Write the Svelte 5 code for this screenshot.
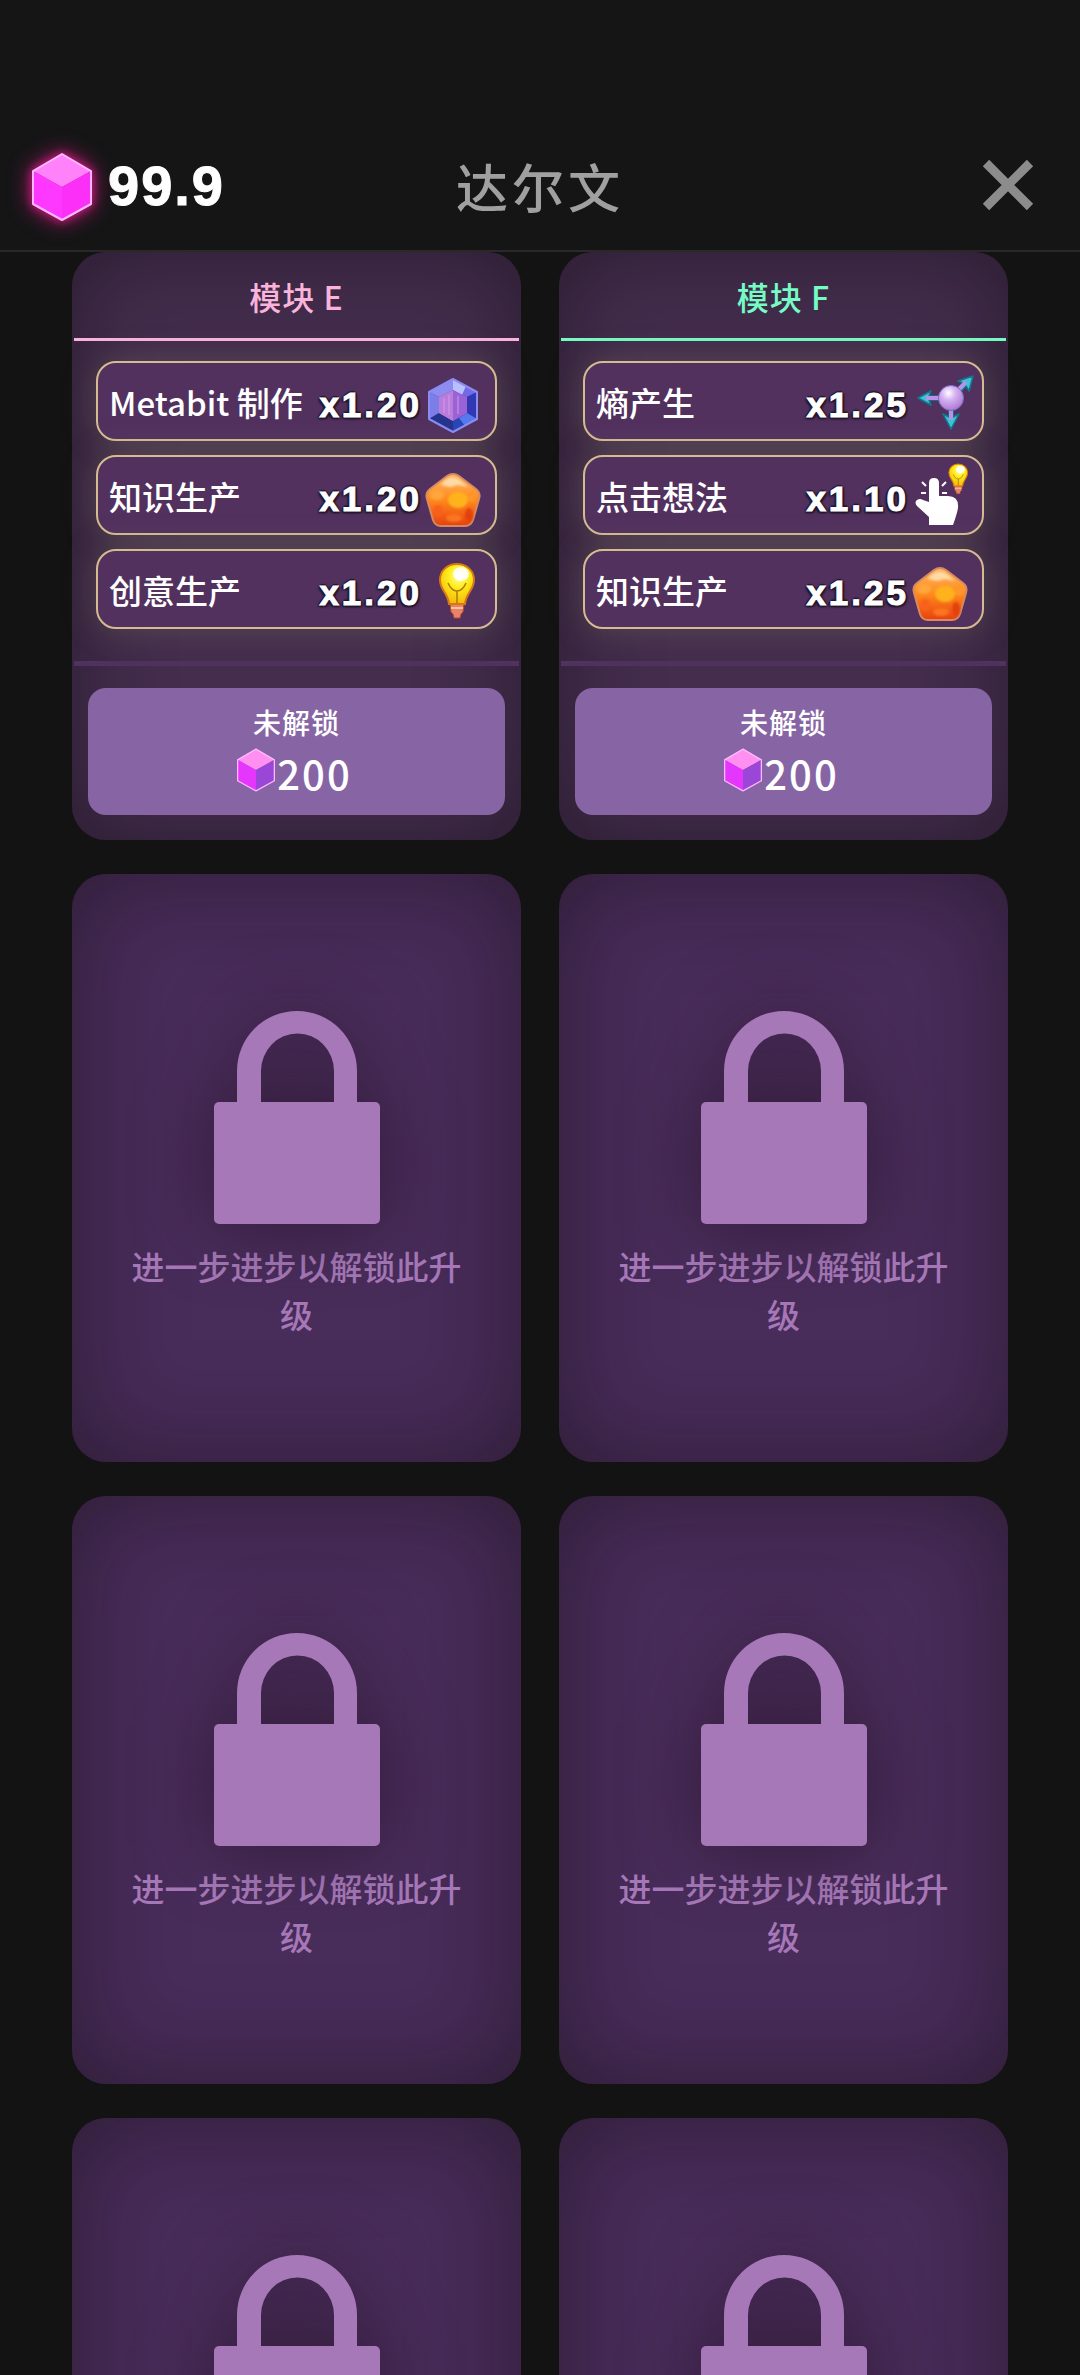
<script>
  const modules = [
    {
      name: "模块 E",
      tone: "pink",
      cost: 200,
      boosts: [
        { label: "Metabit 制作", value: "x1.20", icon: "gem" },
        { label: "知识生产", value: "x1.20", icon: "amber" },
        { label: "创意生产", value: "x1.20", icon: "bulb" },
      ],
    },
    {
      name: "模块 F",
      tone: "mint",
      cost: 200,
      boosts: [
        { label: "熵产生", value: "x1.25", icon: "entropy" },
        { label: "点击想法", value: "x1.10", icon: "tap" },
        { label: "知识生产", value: "x1.25", icon: "amber" },
      ],
    },
  ];
  const lockedCount = 6;
</script>

{#snippet bulbShape()}
  <path d="M28 51h14l-1 8-2 2-1 4h-6l-1-4-2-2z" fill="#e8836a" stroke="#b84a2c" stroke-width="1" />
  <path d="M29 55h12" stroke="#ffc0a0" stroke-width="2" />
  <path d="M35 11c-10 0-17 7-17 16 0 10 8 13 9 24h16c1-11 9-14 9-24 0-9-7-16-17-16z" fill="url(#bulbFill)" stroke="#d87812" stroke-width="2" />
  <path d="M26 30c3 7 7 8 9 8s6-1 9-8M35 38v12" fill="none" stroke="#b07808" stroke-width="1.5" />
  <ellipse cx="39" cy="21" rx="8" ry="7" fill="#fff" opacity=".9" />
{/snippet}

{#snippet boostIcon(name)}
  <svg class="icon" viewBox="0 0 66 72" aria-hidden="true">
    {#if name === "gem"}
      <path d="M31 14 55 27v27L31 67 7 54V27z" fill="#3a3cae" />
      <path d="M31 14 7 27l10 5 14-7z" fill="#8f8cf0" />
      <path d="M31 14 55 27l-10 5-14-7z" fill="#7468e4" />
      <path d="M31 14v11l9 5 4-9z" fill="#b9c0ff" />
      <path d="M7 27v27l10-6V32z" fill="#7c7ee8" />
      <path d="M55 27v27l-10-6V32z" fill="#3038b4" />
      <path d="M7 54l24 13V56l-14-8z" fill="#26348c" />
      <path d="M55 54 31 67V56l14-8z" fill="#2946b8" />
      <path d="M45 48l10 6-12 7-6-8z" fill="#5878ee" />
      <path d="M31 25l14 7v16l-14 8-14-8V32z" fill="#9a62d4" />
      <path d="M31 25v31l-14-8V32z" fill="#b97cda" />
      <path d="M22 33v15M27 30v20M36 31v18" stroke="#d39af0" stroke-width="2" opacity=".5" />
      <path d="M31 14 55 27v27L31 67 7 54V27z" fill="none" stroke="#8a8cf4" stroke-width="2" stroke-linejoin="round" />
    {:else if name === "amber"}
      <path d="M25 17q6-4 12 0l17 13q5 4 3 10l-6 21q-2 6-8 6H19q-6 0-8-6L5 40q-2-6 3-10z" fill="url(#amberFill)" stroke="#d88a62" stroke-width="2" />
      <g filter="url(#soften)">
        <path d="M22 22q9-7 17 0l7 6-10-2-8 2-9-2z" fill="#ffe0b0" opacity=".9" />
        <ellipse cx="15" cy="36" rx="7" ry="5" fill="#ffa63c" />
        <ellipse cx="36" cy="41" rx="10" ry="8" fill="#ffb21e" />
        <ellipse cx="50" cy="37" rx="4" ry="6" fill="#ff962a" />
        <ellipse cx="16" cy="52" rx="5" ry="6" fill="#f9601c" />
        <ellipse cx="32" cy="59" rx="8" ry="4" fill="#fb7420" />
        <ellipse cx="47" cy="56" rx="4" ry="7" fill="#e24310" />
      </g>
    {:else if name === "bulb"}
      {@render bulbShape()}
    {:else if name === "entropy"}
      <g fill="#3cc4d4" stroke="#12788f" stroke-width="1.5" stroke-linejoin="round">
        <path d="M9 33l13-7-2 5h14v4H20l2 5z" />
        <path d="M64 11 49 16l5 2-8 9 3 3 8-9 3 5z" />
        <path d="M42 64l-8-15 6 3V42h4v10l6-3z" />
      </g>
      <path d="M17 33h16M49 25l8-8M42 42v13" stroke="#b892e8" stroke-width="4" />
      <circle cx="42" cy="33" r="12.5" fill="url(#orbFill)" stroke="#7a6cc4" stroke-width="1" />
    {:else}
      <path d="M20 24q0-5 5-5t5 5v13h9q11 0 10 12-1 6-5 17H20v-8L8 47q-3-4 0-6 3-2 6 0l6 2z" fill="#fff" />
      <path d="M13 23l4 4M33 27l4-4M12 34h5M33 34h5" stroke="#fff" stroke-width="2" />
      <g transform="translate(30 -1) scale(.55)">
        {@render bulbShape()}
      </g>
    {/if}
  </svg>
{/snippet}

{#snippet cube(kind)}
  <svg class="cube {kind}" viewBox="0 0 60 68" aria-hidden="true">
    <path class="top" d="M30 1 59 18 30 34 1 18z" />
    <path class="left" d="M1 18 30 34v33L1 51z" />
    <path class="right" d="M59 18 30 34v33l29-16z" />
    <path class="edge" d="M30 1 59 18v33L30 67 1 51V18z" />
  </svg>
{/snippet}

<svg class="defs" aria-hidden="true">
  <radialGradient id="bulbFill" cx=".55" cy=".3" r=".7">
    <stop offset="0" stop-color="#fffbc0" />
    <stop offset=".4" stop-color="#fdf01c" />
    <stop offset="1" stop-color="#f5b80c" />
  </radialGradient>
  <linearGradient id="amberFill" x1="0" y1="0" x2="0" y2="1">
    <stop offset="0" stop-color="#ffb765" />
    <stop offset=".5" stop-color="#ff8a1c" />
    <stop offset="1" stop-color="#e8400e" />
  </linearGradient>
  <radialGradient id="orbFill" cx=".4" cy=".3" r=".8">
    <stop offset="0" stop-color="#fff" />
    <stop offset=".35" stop-color="#d6b4f2" />
    <stop offset="1" stop-color="#a46ccc" />
  </radialGradient>
  <filter id="soften">
    <feGaussianBlur stdDeviation="1" />
  </filter>
</svg>

<div class="screen">
  <header>
    <div class="balance">
      {@render cube("bright")}
      <span>99.9</span>
    </div>
    <h1>达尔文</h1>
    <button class="close" aria-label="关闭">
      <svg viewBox="0 0 52 52" aria-hidden="true">
        <path d="M4 4 48 48M48 4 4 48" />
      </svg>
    </button>
  </header>

  <main>
    <div class="grid">
      {#each modules as module}
        <article class="card module {module.tone}">
          <h2>{module.name}</h2>
          <ul>
            {#each module.boosts as boost}
              <li>
                <span class="label">{boost.label}</span>
                <span class="value">{boost.value}</span>
                {@render boostIcon(boost.icon)}
              </li>
            {/each}
          </ul>
          <div class="buy">
            <button>
              <span class="state">未解锁</span>
              <span class="price">
                {@render cube("small")}
                {module.cost}
              </span>
            </button>
          </div>
        </article>
      {/each}

      {#each Array(lockedCount) as _}
        <article class="card locked">
          <svg class="lock" viewBox="0 0 166 213" aria-hidden="true">
            <rect y="91" width="166" height="122" rx="5" />
            <path d="M23 95V60a60 60 0 0 1 120 0v35h-23V60a36 37 0 0 0-73 0v35z" />
          </svg>
          <p>进一步进步以解锁此升级</p>
        </article>
      {/each}
    </div>
  </main>
</div>

<style>
  :global(body) {
    background: #131313;
  }
  .screen {
    height: 100vh;
    display: flex;
    flex-direction: column;
    overflow: hidden;
    background: #131313;
    color: #fff;
    font-family: "Noto Sans CJK SC", sans-serif;
    font-weight: 500;
  }
  .defs {
    position: absolute;
    width: 0;
    height: 0;
  }
  h1,
  h2,
  p,
  ul {
    margin: 0;
    padding: 0;
    font-weight: 500;
  }
  button {
    border: none;
    padding: 0;
    background: none;
    color: inherit;
    font: inherit;
    cursor: pointer;
  }

  header {
    flex: none;
    display: grid;
    grid-template-columns: 1fr auto 1fr;
    align-items: center;
    padding: 120px 32px 0;
    height: 130px;
    border-bottom: 2px solid #292929;
    background: #151516;
  }
  .balance {
    display: flex;
    align-items: center;
    gap: 16px;
    font: bold 56px "Liberation Sans", sans-serif;
    letter-spacing: 2px;
    -webkit-text-stroke: 1px #fff;
  }
  h1 {
    font-size: 52px;
    letter-spacing: 4px;
    color: #a0a0a0;
  }
  .close {
    justify-self: end;
    width: 52px;
    height: 52px;
    margin-right: 14px;
  }
  .close svg {
    display: block;
    stroke: #8c8c8c;
    stroke-width: 9;
  }

  .cube {
    flex: none;
  }
  .cube .edge {
    fill: none;
    stroke: #ffb8ff;
    stroke-width: 2;
    stroke-linejoin: round;
  }
  .bright {
    width: 60px;
    height: 68px;
    margin-top: 4px;
    filter: drop-shadow(0 0 4px #c81c80) drop-shadow(0 0 10px #b0186c);
  }
  .bright .top {
    fill: #ff82fa;
  }
  .bright .left {
    fill: #ff38ff;
  }
  .bright .right {
    fill: #fb2ff8;
  }
  .small {
    width: 38px;
    height: 44px;
    margin-bottom: 6px;
  }
  .small .top {
    fill: #ff8ff0;
  }
  .small .left {
    fill: #e436fc;
  }
  .small .right {
    fill: #9a46d6;
  }

  main {
    flex: 1;
    min-height: 0;
    overflow-y: auto;
    scrollbar-width: none;
  }
  .grid {
    display: grid;
    grid-template-columns: 1fr 1fr;
    grid-auto-rows: 1fr;
    gap: 34px 38px;
    margin: 0 72px 34px;
  }
  .card {
    box-sizing: border-box;
    border-radius: 34px;
  }

  .module {
    padding: 2px;
    background: #442d4d;
    box-shadow: inset 0 0 90px rgba(20, 15, 24, 0.55);
  }
  .module h2 {
    font-size: 32px;
    line-height: 84px;
    letter-spacing: 1px;
    text-align: center;
    border-bottom: 3px solid;
  }
  .pink h2 {
    color: #fab4dc;
  }
  .mint h2 {
    color: #74fcc4;
  }
  ul {
    display: flex;
    flex-direction: column;
    gap: 14px;
    padding: 20px 22px 32px;
    list-style: none;
    border-bottom: 5px solid #50325f;
  }
  li {
    box-sizing: border-box;
    display: flex;
    align-items: center;
    height: 80px;
    padding: 0 7px 0 11px;
    border: 2px solid #d4bc90;
    border-radius: 20px;
    background: #52315f;
    box-shadow: 0 0 32px rgba(130, 125, 100, 0.35);
  }
  .label {
    flex: 1;
    padding-top: 2px;
    font-size: 33px;
    white-space: nowrap;
  }
  .value {
    padding-top: 8px;
    font: bold 35px "Liberation Sans", sans-serif;
    letter-spacing: 3px;
    -webkit-text-stroke: 1px #fff;
    text-shadow:
      2px 0 1px #22182c,
      -2px 0 1px #22182c,
      0 2px 1px #22182c,
      0 -2px 1px #22182c,
      2px 2px 2px #22182c,
      -2px 2px 2px #22182c;
  }
  .icon {
    flex: none;
    width: 66px;
    height: 72px;
  }
  .buy {
    padding: 22px 14px 23px;
  }
  .buy button {
    width: 100%;
    display: flex;
    flex-direction: column;
    align-items: center;
    padding: 13px 0 12px;
    border-radius: 18px;
    background: #8765a5;
  }
  .state {
    font-size: 28px;
    line-height: 42px;
    letter-spacing: 1px;
  }
  .price {
    display: flex;
    align-items: center;
    gap: 2px;
    padding-right: 4px;
    font-size: 40px;
    line-height: 60px;
    letter-spacing: 2px;
  }

  .locked {
    display: flex;
    flex-direction: column;
    align-items: center;
    padding: 137px 50px 0;
    background: #482c5a;
    box-shadow: inset 0 0 100px rgba(20, 14, 16, 0.5);
    color: #a678b8;
  }
  .lock {
    width: 166px;
    height: 213px;
    fill: #a678b8;
    filter: drop-shadow(0 0 36px rgba(40, 20, 40, 0.7));
  }
  .locked p {
    margin-top: 18px;
    font-size: 33px;
    line-height: 48px;
    text-align: center;
  }
</style>
